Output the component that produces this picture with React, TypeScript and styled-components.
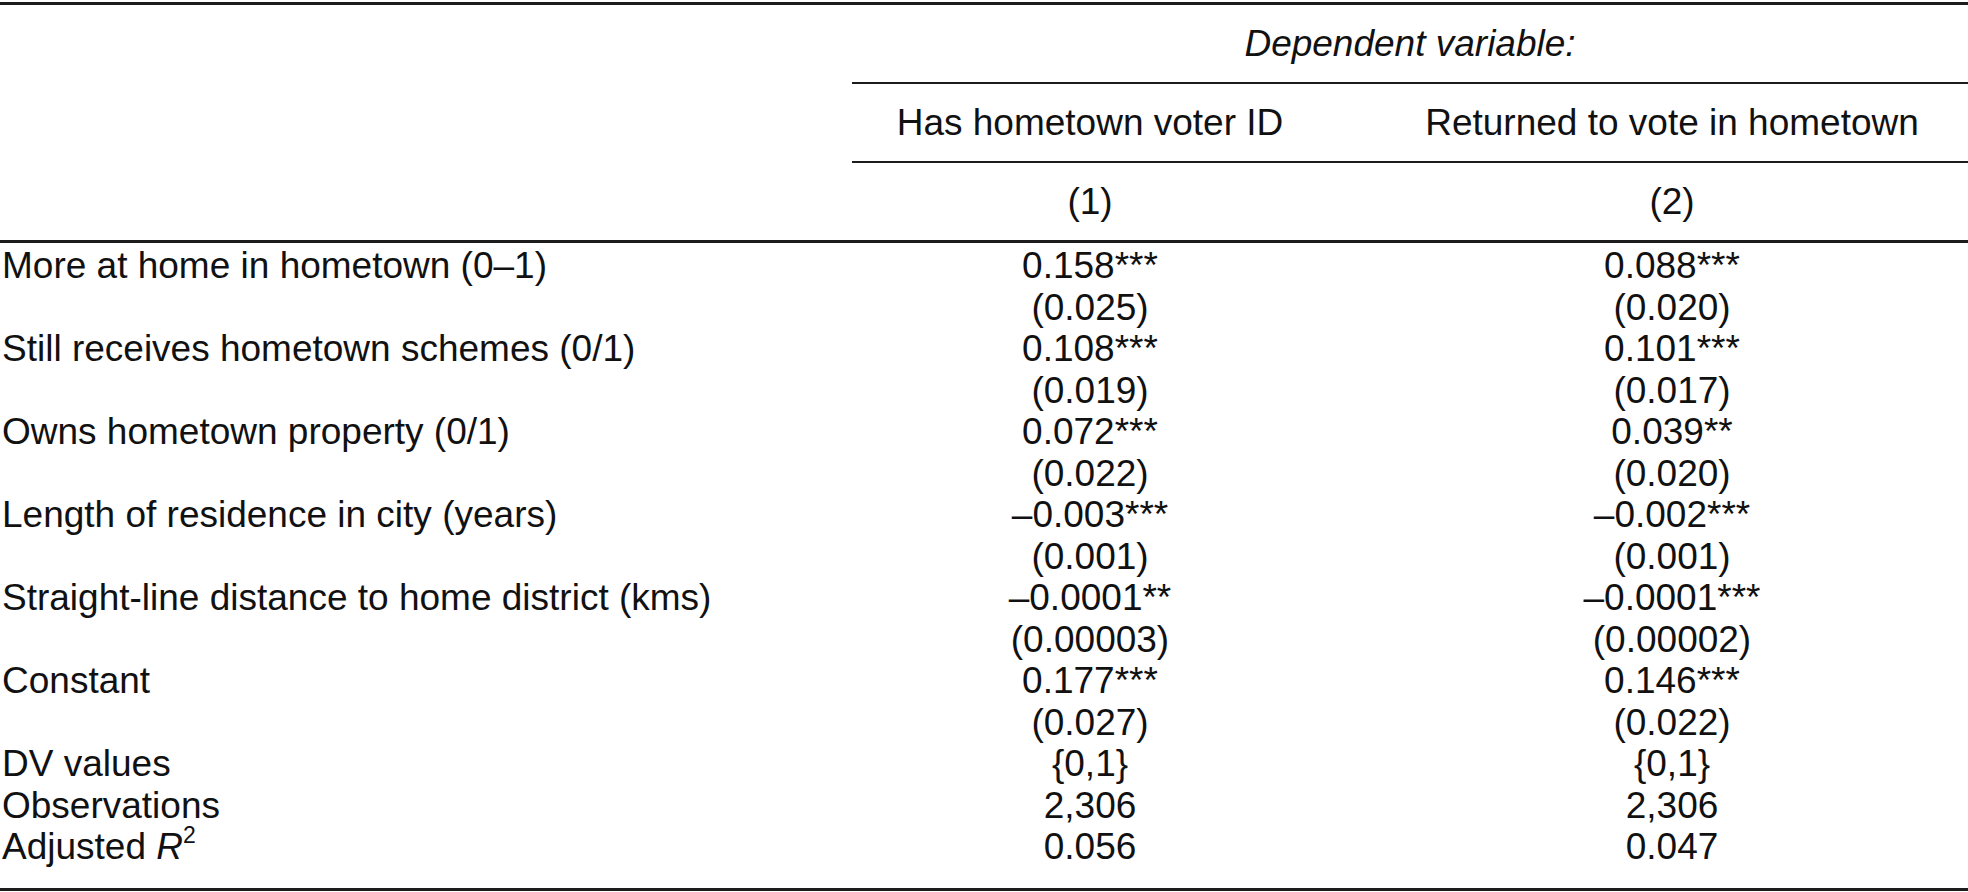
import React from "react";
import styled, { createGlobalStyle } from "styled-components";

interface Coef {
  value: string;
  stars?: string;
}

interface EstimateRow {
  label: string;
  est: [Coef, Coef];
  se: [string, string];
}

const GlobalStyle = createGlobalStyle`
  html, body {
    margin: 0;
    padding: 0;
    background: #fff;
  }
  body {
    font-family: "Liberation Sans", Arial, Helvetica, sans-serif;
    color: #111;
  }
`;

const Page = styled.div`
  width: 1968px;
  padding-top: 2px;
`;

const Table = styled.div`
  border-top: 3px solid #1c1c1c;
  border-bottom: 3px solid #1c1c1c;
  font-size: 37px;
  line-height: 41.5px;
`;

const Row = styled.div<{ $height?: number; $rule?: number }>`
  display: grid;
  grid-template-columns: 852px 476px 1fr;
  height: ${({ $height }) => ($height ? `${$height}px` : "auto")};
  border-bottom: ${({ $rule }) => ($rule ? `${$rule}px solid #1c1c1c` : "none")};
`;

const Label = styled.div`
  padding-left: 2px;
  white-space: nowrap;
`;

const Caption = styled.div`
  grid-column: 2 / 4;
  display: flex;
  align-items: center;
  justify-content: center;
  font-style: italic;
  border-bottom: 2px solid #1c1c1c;
`;

const HeadCell = styled.div<{ $second?: boolean }>`
  display: flex;
  align-items: center;
  justify-content: center;
  padding-left: ${({ $second }) => ($second ? "48px" : "0")};
  border-bottom: 2px solid #1c1c1c;
  white-space: nowrap;
`;

const NumCell = styled.div<{ $second?: boolean }>`
  display: flex;
  align-items: center;
  justify-content: center;
  padding-left: ${({ $second }) => ($second ? "48px" : "0")};
`;

const Value = styled.div<{ $second?: boolean }>`
  text-align: center;
  padding-left: ${({ $second }) => ($second ? "48px" : "0")};
  white-space: nowrap;
`;

const Body = styled.div`
  padding-top: 2px;
  padding-bottom: 20px;
`;

const Italic = styled.i`
  font-style: italic;
`;

const Sup = styled.sup`
  font-size: 23px;
  line-height: 0;
  vertical-align: 0;
  position: relative;
  top: -16px;
`;

const estimates: EstimateRow[] = [
  {
    label: "More at home in hometown (0–1)",
    est: [
      { value: "0.158", stars: "***" },
      { value: "0.088", stars: "***" },
    ],
    se: ["(0.025)", "(0.020)"],
  },
  {
    label: "Still receives hometown schemes (0/1)",
    est: [
      { value: "0.108", stars: "***" },
      { value: "0.101", stars: "***" },
    ],
    se: ["(0.019)", "(0.017)"],
  },
  {
    label: "Owns hometown property (0/1)",
    est: [
      { value: "0.072", stars: "***" },
      { value: "0.039", stars: "**" },
    ],
    se: ["(0.022)", "(0.020)"],
  },
  {
    label: "Length of residence in city (years)",
    est: [
      { value: "–0.003", stars: "***" },
      { value: "–0.002", stars: "***" },
    ],
    se: ["(0.001)", "(0.001)"],
  },
  {
    label: "Straight-line distance to home district (kms)",
    est: [
      { value: "–0.0001", stars: "**" },
      { value: "–0.0001", stars: "***" },
    ],
    se: ["(0.00003)", "(0.00002)"],
  },
  {
    label: "Constant",
    est: [
      { value: "0.177", stars: "***" },
      { value: "0.146", stars: "***" },
    ],
    se: ["(0.027)", "(0.022)"],
  },
];

const stats: { label: React.ReactNode; values: [string, string] }[] = [
  { label: "DV values", values: ["{0,1}", "{0,1}"] },
  { label: "Observations", values: ["2,306", "2,306"] },
  {
    label: (
      <>
        Adjusted <Italic>R</Italic>
        <Sup>2</Sup>
      </>
    ),
    values: ["0.056", "0.047"],
  },
];

const App = () => {
  return (
    <Page>
      <GlobalStyle />
      <Table>
        <Row $height={79}>
          <Label />
          <Caption>Dependent variable:</Caption>
        </Row>
        <Row $height={79}>
          <Label />
          <HeadCell>Has hometown voter ID</HeadCell>
          <HeadCell $second>Returned to vote in hometown</HeadCell>
        </Row>
        <Row $height={77} $rule={3}>
          <Label />
          <NumCell>(1)</NumCell>
          <NumCell $second>(2)</NumCell>
        </Row>
        <Body>
          {estimates.map((row) => (
            <React.Fragment key={row.label}>
              <Row>
                <Label>{row.label}</Label>
                {row.est.map((c, i) => (
                  <Value key={i} $second={i === 1}>
                    {c.value}
                    {c.stars}
                  </Value>
                ))}
              </Row>
              <Row>
                <Label />
                {row.se.map((s, i) => (
                  <Value key={i} $second={i === 1}>
                    {s}
                  </Value>
                ))}
              </Row>
            </React.Fragment>
          ))}
          {stats.map((row, idx) => (
            <Row key={idx}>
              <Label>{row.label}</Label>
              {row.values.map((v, i) => (
                <Value key={i} $second={i === 1}>
                  {v}
                </Value>
              ))}
            </Row>
          ))}
        </Body>
      </Table>
    </Page>
  );
};

export default App;
